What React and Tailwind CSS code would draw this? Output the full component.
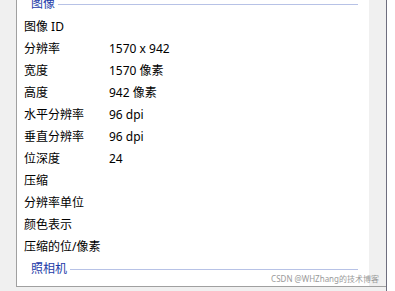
import React from "react";

const rows = [
  { label: "图像 ID", value: "" },
  { label: "分辨率", value: "1570 x 942" },
  { label: "宽度", value: "1570 像素" },
  { label: "高度", value: "942 像素" },
  { label: "水平分辨率", value: "96 dpi" },
  { label: "垂直分辨率", value: "96 dpi" },
  { label: "位深度", value: "24" },
  { label: "压缩", value: "" },
  { label: "分辨率单位", value: "" },
  { label: "颜色表示", value: "" },
  { label: "压缩的位/像素", value: "" },
];

const GroupHeader = ({ title, className = "" }) => (
  <div className={`flex items-center pl-[14px] pr-[11px] ${className}`}>
    <span className="text-[#1c3ba8]">{title}</span>
    <div className="flex-1 h-px bg-[#b7c2e6] ml-[3px] mt-[1px]"></div>
  </div>
);

const App = () => {
  return (
    <div
      className="relative w-[395px] h-[291px] overflow-hidden bg-white flex text-[12px] text-black"
      style={{ fontFamily: '"Noto Sans", "Noto Sans CJK SC", sans-serif' }}
    >
      {/* left gutter */}
      <div className="w-[16px] h-full bg-[#f0f0f0]"></div>

      <div className="w-[370px] h-full flex flex-col bg-[#f0f0f0]">
        <div className="h-[287px] flex border-l border-b border-[#a0a0a0] bg-white">
          {/* properties list */}
          <div className="w-[352px] h-full overflow-hidden">
            <GroupHeader title="图像" className="h-[24px] -mt-[8px]" />
            {rows.map((row) => (
              <div key={row.label} className="flex items-center h-[22px] pl-[7px]">
                <span className="w-[85px] whitespace-nowrap">{row.label}</span>
                <span className="whitespace-nowrap">{row.value}</span>
              </div>
            ))}
            <GroupHeader title="照相机" className="h-[22px]" />
          </div>
          {/* scrollbar gutter */}
          <div className="w-[17px] h-full bg-[#f0f0f0]"></div>
        </div>
      </div>

      {/* window edge */}
      <div className="w-px h-full bg-[#6e6e7e]"></div>
      <div className="flex-1 h-full bg-white"></div>

      {/* watermark */}
      <div className="absolute right-[16px] top-[273px] text-[8px] leading-[11px] text-[#9a9a9a] whitespace-nowrap">
        CSDN @WHZhang的技术博客
      </div>
    </div>
  );
};

export default App;
